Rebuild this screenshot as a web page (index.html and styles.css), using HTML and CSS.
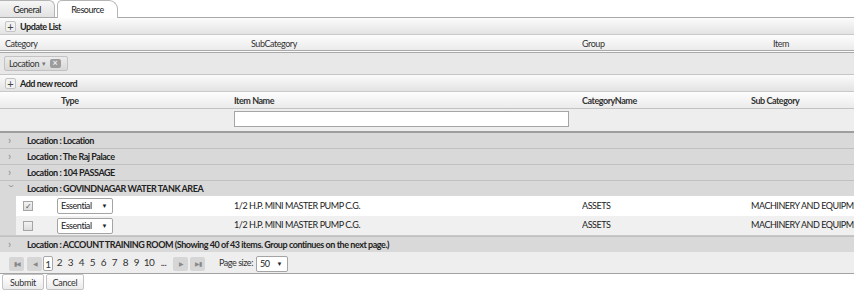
FILE: index.html
```html
<!DOCTYPE html>
<html lang="en">
<head>
<meta charset="UTF-8">
<title>Resource</title>
<link rel="stylesheet" href="styles.css">
</head>
<body>
<div class="tabs">
  <span class="tab">General</span>
  <span class="tab active">Resource</span>
</div>
<div class="panel">
  <div class="toolbar"><span class="plus">+</span>Update List</div>
  <div class="head top-cols">
    <span>Category</span><span>SubCategory</span><span>Group</span><span>Item</span>
  </div>
  <div class="group-panel">
    <span class="chip">Location <span class="caret">&#9662;</span><span class="close">&#215;</span></span>
  </div>
  <div class="toolbar"><span class="plus">+</span>Add new record</div>
  <div class="head cols">
    <span></span><span></span><span class="type">Type</span><span>Item Name</span><span>CategoryName</span><span>Sub Category</span>
  </div>
  <div class="filter cols">
    <span></span><span></span><span></span><span><input type="text" class="filter-input"></span><span></span><span></span>
  </div>
  <div class="group-row first"><span class="arrow">&#8250;</span>Location : Location</div>
  <div class="group-row"><span class="arrow">&#8250;</span>Location : The Raj Palace</div>
  <div class="group-row"><span class="arrow">&#8250;</span>Location : 104 PASSAGE</div>
  <div class="group-row"><span class="arrow open">&#8250;</span>Location : GOVINDNAGAR WATER TANK AREA</div>
  <div class="row cols">
    <span class="indent"></span>
    <span class="cell-check"><span class="check">&#10003;</span></span>
    <span><span class="select">Essential <span class="caret">&#9660;</span></span></span>
    <span>1/2 H.P. MINI MASTER PUMP C.G.</span>
    <span>ASSETS</span>
    <span>MACHINERY AND EQUIPMENT</span>
  </div>
  <div class="row alt cols">
    <span class="indent"></span>
    <span class="cell-check"><span class="check"></span></span>
    <span><span class="select">Essential <span class="caret">&#9660;</span></span></span>
    <span>1/2 H.P. MINI MASTER PUMP C.G.</span>
    <span>ASSETS</span>
    <span>MACHINERY AND EQUIPMENT</span>
  </div>
  <div class="group-row"><span class="arrow">&#8250;</span>Location : ACCOUNT TRAINING ROOM (Showing 40 of 43 items. Group continues on the next page.)</div>
  <div class="pager">
    <span class="pbtn first-btn">&#9646;&#9664;</span>
    <span class="pbtn prev-btn">&#9664;</span>
    <span class="pages">
      <span class="page current">1</span><span class="page">2</span><span class="page">3</span><span class="page">4</span><span class="page">5</span><span class="page">6</span><span class="page">7</span><span class="page">8</span><span class="page">9</span><span class="page wide">10</span><span class="page more">...</span>
    </span>
    <span class="pbtn">&#9654;</span>
    <span class="pbtn">&#9654;&#9646;</span>
    <span class="page-size">Page size:</span>
    <span class="select small">50 <span class="caret">&#9660;</span></span>
  </div>
</div>
<div class="actions">
  <button class="btn">Submit</button>
  <button class="btn cancel">Cancel</button>
</div>
</body>
</html>
```

FILE: styles.css
```css
* {
  box-sizing: border-box;
}
body {
  margin: 0;
  font-family: Lato, "Open Sans", sans-serif;
  font-size: 9px;
  letter-spacing: -0.45px;
  line-height: 1.2;
  color: #222;
  background: #fff;
  width: 854px;
  overflow: hidden;
}
.tabs {
  display: flex;
  height: 18px;
  align-items: flex-end;
  gap: 2px;
  border-bottom: 1px solid #a8a8a8;
}
.tab {
  height: 17px;
  line-height: 17px;
  width: 55px;
  text-align: center;
  border: 1px solid #b5b5b5;
  border-left: none;
  border-bottom: none;
  border-radius: 0 6px 0 0;
  background: linear-gradient(#f6f6f6, #e2e2e2);
}
.tab.active {
  width: 61px;
  height: 18px;
  margin-bottom: -1px;
  border-left: 1px solid #b5b5b5;
  border-radius: 5px 9px 0 0;
  background: #fff;
}
.toolbar {
  height: 17px;
  display: flex;
  align-items: center;
  padding: 2px 0 0 5px;
  font-weight: 700;
  white-space: nowrap;
  background: linear-gradient(#fbfbfb, #e3e3e3);
  border-bottom: 1px solid #c9c9c9;
}
.plus {
  display: inline-block;
  width: 11px;
  height: 11px;
  line-height: 9px;
  margin: -2px 4px 0 0;
  text-align: center;
  border: 1px solid #c4c4c4;
  border-radius: 2px;
  background: #f2f2f2;
  font-size: 11px;
  font-weight: 400;
  letter-spacing: 0;
  color: #444;
}
.head {
  height: 18px;
  line-height: 17px;
  background: linear-gradient(#fdfdfd, #ebebeb);
  border-bottom: 3px double #a9a9a9;
  color: #333;
  white-space: nowrap;
}
.top-cols {
  display: grid;
  grid-template-columns: 246px 331px 191px 1fr;
  padding-left: 5px;
}
.cols {
  display: grid;
  grid-template-columns: 16px 41px 177px 348px 169px 1fr;
}
.cols > span {
  white-space: nowrap;
  overflow: hidden;
}
.head.cols {
  height: 17px;
  line-height: 18px;
  font-weight: 700;
  border-bottom: 1px solid #c3c3c3;
}
.type {
  padding-left: 4px;
}
.group-panel {
  height: 22px;
  padding: 3px 0 0 4px;
  background: #e8e8e8;
  border-bottom: 1px solid #c6c6c6;
}
.chip {
  display: inline-flex;
  align-items: center;
  height: 15px;
  width: 64px;
  padding: 1px 4px 0;
  border: 1px solid #c2c2c2;
  border-radius: 2px;
  background: linear-gradient(#ececec, #d8d8d8);
  color: #333;
}
.chip .caret {
  font-size: 7px;
  color: #777;
  margin: -1px 4px 0 3px;
}
.close {
  display: inline-block;
  width: 11px;
  height: 9px;
  line-height: 8px;
  margin-top: -1px;
  text-align: center;
  border-radius: 2px;
  background: #9c9c9c;
  color: #eee;
  font-size: 9px;
  font-weight: 700;
  letter-spacing: 0;
}
.filter {
  height: 24px;
  padding-top: 2px;
  background: #eeeeee;
  border-bottom: 2px solid #9e9e9e;
}
.filter-input {
  display: block;
  width: 335px;
  height: 16px;
  margin: 0;
  border: 1px solid #a5a5a5;
  background: #fff;
}
.group-row {
  height: 16px;
  line-height: 14px;
  background: #d9d9d9;
  border-top: 1px solid #c1c1c1;
  font-weight: 700;
  color: #222;
  padding-left: 8px;
  white-space: nowrap;
  overflow: hidden;
}
.group-row.first {
  border-top: none;
  height: 15px;
  line-height: 13px;
}
.arrow {
  display: inline-block;
  width: 19px;
  color: #888;
  font-size: 11px;
  font-weight: 400;
  letter-spacing: 0;
}
.arrow.open {
  transform: rotate(90deg);
  width: 7px;
  margin-right: 12px;
}
.row {
  height: 20px;
  align-items: center;
  background: #fff;
}
.row.alt {
  background: #f0f0f0;
  border-bottom: 1px solid #c8c8c8;
}
.indent {
  align-self: stretch;
  background: #d9d9d9;
}
.cell-check {
  padding-left: 7px;
}
.check {
  display: block;
  width: 10px;
  height: 10px;
  line-height: 9px;
  text-align: center;
  border: 1px solid #a5a5a5;
  background: linear-gradient(#f2f2f2, #dcdcdc);
  color: #555;
  font-size: 8px;
}
.select {
  display: inline-flex;
  align-items: center;
  justify-content: space-between;
  width: 56px;
  height: 16px;
  padding: 1px 5px 0 3px;
  border: 1px solid #a4a4a4;
  border-radius: 2px;
  background: #fff;
}
.select .caret {
  font-size: 6px;
  color: #222;
  margin-top: -1px;
}
.select.small {
  width: 32px;
}
.pager {
  height: 22px;
  display: flex;
  align-items: center;
  padding: 2px 0 0 9px;
  background: #eeeeee;
  border-bottom: 1px solid #a3a3a3;
  white-space: nowrap;
}
.pbtn {
  display: inline-block;
  width: 15px;
  height: 14px;
  line-height: 14px;
  margin-right: 2px;
  text-align: center;
  border-radius: 2px;
  background: #d6d6d6;
  color: #888;
  font-size: 6px;
  letter-spacing: -1px;
}
.first-btn {
  margin-right: 3px;
}
.prev-btn {
  margin-right: 1px;
}
.pages {
  display: flex;
  font-size: 10px;
  margin-right: 2px;
}
.page {
  width: 11px;
  text-align: center;
  color: #333;
}
.page.wide {
  width: 14px;
}
.page.more {
  width: 15px;
}
.page.current {
  width: 10px;
  height: 15px;
  line-height: 14px;
  margin-right: 1px;
  background: #fff;
  border: 1px solid #a8a8a8;
  border-radius: 2px;
}
.page-size {
  margin: 0 3px 0 12px;
  color: #333;
}
.actions {
  display: flex;
  gap: 2px;
  padding: 0 0 0 2px;
}
.btn {
  width: 42px;
  height: 16px;
  padding: 1px 0 0;
  font-family: inherit;
  font-size: 9px;
  letter-spacing: -0.3px;
  line-height: 12px;
  color: #333;
  border: 1px solid #c3c3c3;
  border-radius: 2px;
  background: linear-gradient(#ffffff, #ebebeb);
}
.btn.cancel {
  width: 38px;
}
```
